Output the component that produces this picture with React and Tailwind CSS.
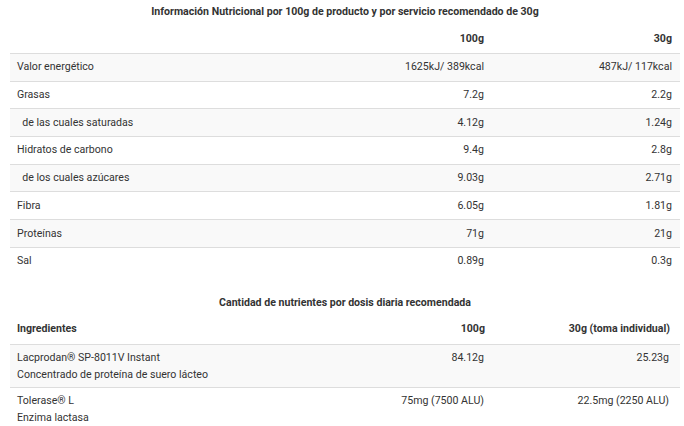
import React from "react";

const rows = [
  ["Valor energético", "1625kJ/ 389kcal", "487kJ/ 117kcal", true],
  ["Grasas", "7.2g", "2.2g", false],
  ["\u00a0\u00a0de las cuales saturadas", "4.12g", "1.24g", true],
  ["Hidratos de carbono", "9.4g", "2.8g", false],
  ["\u00a0\u00a0de los cuales azúcares", "9.03g", "2.71g", true],
  ["Fibra", "6.05g", "1.81g", false],
  ["Proteínas", "71g", "21g", true],
  ["Sal", "0.89g", "0.3g", false],
];

export default function App() {
  return (
    <div
      className="w-[684px] h-[426px] overflow-hidden bg-white text-[#333] text-[10.6px] pl-[10px] pr-[4px]"
      style={{ fontFamily: "Roboto, 'Liberation Sans', sans-serif" }}
    >
      <div className="h-[24px] leading-[24px] text-center font-bold">
        Información Nutricional por 100g de producto y por servicio recomendado de 30g
      </div>
      <div className="grid grid-cols-[1fr_188px_188px] h-[29px] items-center font-bold">
        <div className="px-[7px]"></div>
        <div className="px-[8px] text-right">100g</div>
        <div className="px-[8px] text-right">30g</div>
      </div>
      {rows.map(([a, b, c, shade], i) => (
        <div
          key={i}
          className={`grid grid-cols-[1fr_188px_188px] h-[27.7px] items-center border-t border-[#ddd] ${shade ? "bg-[#f9f9f9]" : "bg-white"}`}
        >
          <div className="px-[7px] whitespace-pre">{a}</div>
          <div className="px-[8px] text-right">{b}</div>
          <div className="px-[8px] text-right">{c}</div>
        </div>
      ))}
      <div className="mt-[16px] h-[24px] leading-[24px] text-center font-bold">
        Cantidad de nutrientes por dosis diaria recomendada
      </div>
      <div className="grid grid-cols-[1fr_188px_188px] h-[29px] items-center font-bold">
        <div className="px-[7px]">Ingredientes</div>
        <div className="px-[7px] text-right">100g</div>
        <div className="px-[10px] text-right">30g (toma individual)</div>
      </div>
      <div className="grid grid-cols-[1fr_188px_188px] border-t border-[#ddd] bg-[#f9f9f9] py-[4px] leading-[17px]">
        <div className="px-[7px]">
          <div>Lacprodan® SP-8011V Instant</div>
          <div>Concentrado de proteína de suero lácteo</div>
        </div>
        <div className="px-[8px] text-right">84.12g</div>
        <div className="px-[11px] text-right">25.23g</div>
      </div>
      <div className="grid grid-cols-[1fr_188px_188px] border-t border-[#ddd] bg-white py-[4px] leading-[17px]">
        <div className="px-[7px]">
          <div>Tolerase® L</div>
          <div>Enzima lactasa</div>
        </div>
        <div className="px-[8px] text-right">75mg (7500 ALU)</div>
        <div className="px-[11px] text-right">22.5mg (2250 ALU)</div>
      </div>
    </div>
  );
}
